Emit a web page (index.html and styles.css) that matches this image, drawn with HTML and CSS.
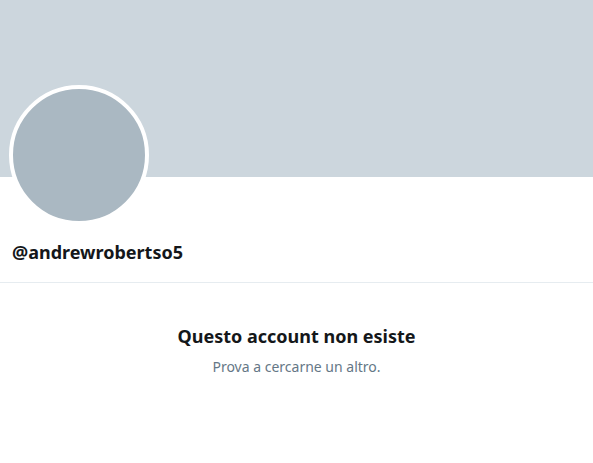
FILE: index.html
```html
<!DOCTYPE html>
<html lang="it">
<head>
<meta charset="utf-8">
<title>Profilo</title>
<link rel="stylesheet" href="styles.css">
</head>
<body>
<div class="page">
  <div class="banner"></div>
  <div class="profile">
    <div class="avatar"></div>
    <div class="handle">@andrewrobertso5</div>
  </div>
  <div class="empty">
    <div class="title">Questo account non esiste</div>
    <div class="subtitle">Prova a cercarne un altro.</div>
  </div>
</div>
</body>
</html>
```
FILE: styles.css
```css
html, body {
  margin: 0;
  padding: 0;
  background: #ffffff;
}
body {
  font-family: "Noto Sans", "Open Sans", sans-serif;
  color: #14171a;
}
.page {
  width: 593px;
}
.banner {
  height: 177px;
  background: #ccd6dd;
}
.profile {
  display: flow-root;
  padding: 0 12px 0 9px;
  border-bottom: 1px solid #e6ecf0;
  height: 106px;
  box-sizing: border-box;
}
.avatar {
  width: 132px;
  height: 132px;
  border: 4px solid #ffffff;
  border-radius: 50%;
  background: #aab8c2;
  margin-top: -92px;
}
.handle {
  margin-top: 15px;
  margin-left: 3px;
  font-size: 18px;
  line-height: 24px;
  font-weight: 700;
  color: #14171a;
}
.empty {
  display: flex;
  flex-direction: column;
  align-items: center;
  padding-top: 41px;
}
.title {
  font-size: 18px;
  line-height: 24px;
  font-weight: 700;
  color: #14171a;
}
.subtitle {
  margin-top: 9px;
  font-size: 14px;
  line-height: 20px;
  color: #657786;
}
```
